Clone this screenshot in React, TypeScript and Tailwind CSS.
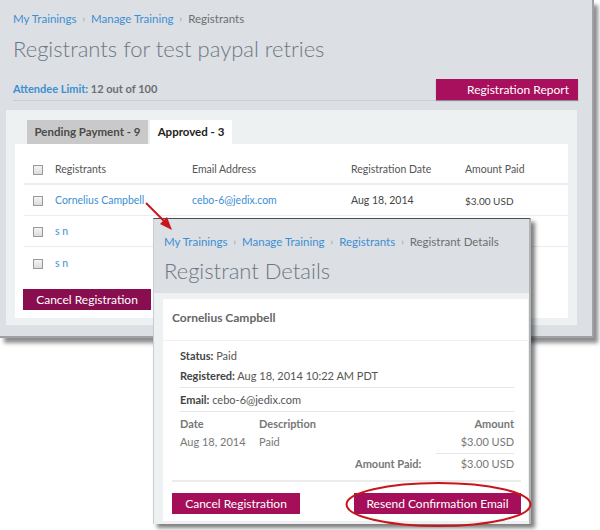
const font = "font-['Lato','Noto_Sans',sans-serif]";

function Crumbs(props: { links: string[]; current: string }) {
  return (
    <div className="flex h-[14px] items-center text-[11.5px] leading-[14px]">
      {props.links.map((l) => (
        <span key={l} className="flex items-center">
          <span className="text-[#3d8fd3]">{l}</span>
          <span className="mx-[6px] text-[9px] text-[#999]">›</span>
        </span>
      ))}
      <span className="text-[#6b6f73]">{props.current}</span>
    </div>
  );
}

function Box() {
  return <span className="inline-block h-[10px] w-[10px] border border-[#9a9a9a] bg-gradient-to-b from-[#f4f4f4] to-[#dcdcdc]" />;
}

const rows = [
  { name: "Cornelius Campbell", email: "cebo-6@jedix.com", date: "Aug 18, 2014", paid: "$3.00 USD" },
  { name: "s n", email: "", date: "", paid: "" },
  { name: "s n", email: "", date: "", paid: "" },
];

function BackWindow() {
  return (
    <div className="absolute left-0 top-0 h-[338px] w-[594px] border-r-2 border-b-2 border-[#9ea2a6] bg-[#dcdfe3] shadow-[4px_5px_4px_rgba(0,0,0,0.45)]">
      <div className="px-[13px] pt-[12px]">
        <Crumbs links={["My Trainings", "Manage Training"]} current="Registrants" />
        <h1 className="mt-[9px] text-[22px] font-light leading-[28px] text-[#6c7884]">Registrants for test paypal retries</h1>
        <div className="mt-[16px] flex h-[22px] items-start justify-between border-b border-[#c9ccd0]">
          <div className="mt-[3px] text-[11px] font-bold leading-[14px]">
            <span className="text-[#3d8fd3]">Attendee Limit:</span> <span className="text-[#6b6f73]">12 out of 100</span>
          </div>
          <button type="button" className="mr-px h-[21px] w-[142px] bg-[#a80f5c] pl-[22px] text-center text-[12px] text-white shadow-[0_1px_1px_rgba(0,0,0,0.3)]">
            Registration Report
          </button>
        </div>
        <div className="-ml-[7px] mt-[9px] w-[571px] bg-[#eef1f2] px-[9px] pb-[7px] pt-[10px]">
          <div className="ml-[12px] flex gap-[2px]">
            <div className="flex h-[24px] w-[121px] items-center justify-center bg-[#c9c9c9] text-[11.5px] font-bold text-[#4a4a4a]">Pending Payment - 9</div>
            <div className="flex h-[24px] w-[82px] items-center justify-center bg-white text-[11.5px] font-bold text-[#222]">Approved - 3</div>
          </div>
          <div className="h-[174px] bg-white pl-[9px] pt-[12px]">
            <div className="flex h-[29px] items-center border-b-2 border-[#ececec] text-[10.5px] text-[#555]">
              <div className="flex w-[31px] justify-end pr-[12px]"><Box /></div>
              <div className="w-[137px]">Registrants</div>
              <div className="w-[159px]">Email Address</div>
              <div className="w-[114px]">Registration Date</div>
              <div>Amount Paid</div>
            </div>
            {rows.map((r, i) => (
              <div key={i} className={`flex h-[31px] items-center pt-[2px] text-[10.5px] ${i < 2 ? "border-b border-[#ececec]" : ""}`}>
                <div className="flex w-[31px] justify-end pr-[12px]"><Box /></div>
                <div className="w-[137px] text-[#3d8fd3]">{r.name}</div>
                <div className="w-[159px] text-[#3d8fd3]">{r.email}</div>
                <div className="w-[114px] text-[#444]">{r.date}</div>
                <div className="text-[10px] text-[#444]">{r.paid}</div>
              </div>
            ))}
            <button type="button" className="-ml-px mt-[11px] h-[21px] w-[128px] bg-[#880e4f] text-[12px] text-white">Cancel Registration</button>
          </div>
        </div>
      </div>
    </div>
  );
}

function DetailWindow() {
  return (
    <div className="absolute left-[153px] top-[218px] flex h-[306px] w-[378px] flex-col border-t border-l border-t-[#4a4d52] border-l-[#c9ccd0] border-r-2 border-r-[#b0b3b6] bg-[#dcdfe3] shadow-[4px_4px_4px_rgba(0,0,0,0.5)]">
      <div className="pl-[10px] pt-[16px]">
        <Crumbs links={["My Trainings", "Manage Training", "Registrants"]} current="Registrant Details" />
        <h2 className="mt-[8px] pb-[8px] text-[22px] font-light leading-[28px] text-[#6c7884]">Registrant Details</h2>
      </div>
      <div className="flex-1 bg-[#eef1f2] pb-[3px] pl-[9px] pr-[1px] pt-[6px]">
        <div className="h-full bg-white">
          <div className="h-[42px] border-b border-[#f0f0f0] pl-[9px] pt-[12px] text-[12px] font-bold leading-[14px] text-[#666]">Cornelius Campbell</div>
          <div className="pl-[17px] pr-[14px] text-[11px] text-[#555]">
            <div className="mt-[6px] leading-[18px]"><b className="text-[#444]">Status:</b> Paid</div>
            <div className="mt-[2px] border-b border-[#e6e6e6] pb-[2px] leading-[18px]"><b className="text-[#444]">Registered:</b> Aug 18, 2014 10:22 AM PDT</div>
            <div className="border-b border-[#e6e6e6] pb-[2px] pt-[3px] leading-[18px]"><b className="text-[#444]">Email:</b> cebo-6@jedix.com</div>
            <div className="flex pt-[3px] font-bold leading-[18px] text-[#777]">
              <div className="w-[79px]">Date</div>
              <div className="flex-1">Description</div>
              <div>Amount</div>
            </div>
            <div className="flex leading-[18px] text-[#777]">
              <div className="w-[79px]">Aug 18, 2014</div>
              <div className="flex-1">Paid</div>
              <div>$3.00 USD</div>
            </div>
            <div className="ml-auto mt-[2px] w-[78px] border-t border-[#e6e6e6]" />
            <div className="flex pt-[2px] leading-[16px] text-[#777]">
              <div className="ml-[175px] font-bold">Amount Paid:</div>
              <div className="ml-auto">$3.00 USD</div>
            </div>
            <div className="-ml-[8px] -mr-[7px] mt-[8px] border-t-2 border-[#ececec]" />
            <div className="-ml-[8px] -mr-[7px] mt-[11px] flex justify-between">
              <button type="button" className="h-[21px] w-[128px] bg-[#a50f5a] text-[12px] text-white">Cancel Registration</button>
              <button type="button" className="h-[21px] w-[167px] bg-[#a50f5a] text-[12px] text-white">Resend Confirmation Email</button>
            </div>
          </div>
        </div>
      </div>
    </div>
  );
}

export default function App() {
  return (
    <div className={`relative h-[530px] w-[600px] overflow-hidden bg-white ${font}`}>
      <BackWindow />
      <DetailWindow />
      <svg className="pointer-events-none absolute left-0 top-0" width="600" height="530" viewBox="0 0 600 530">
        <line x1="146" y1="203" x2="165" y2="222" stroke="#c8161d" strokeWidth="2" />
        <polygon points="172,230 160,224 167,217" fill="#c8161d" />
        <ellipse cx="438.5" cy="504.5" rx="92" ry="21.5" fill="none" stroke="#c8161d" strokeWidth="2" />
      </svg>
    </div>
  );
}
